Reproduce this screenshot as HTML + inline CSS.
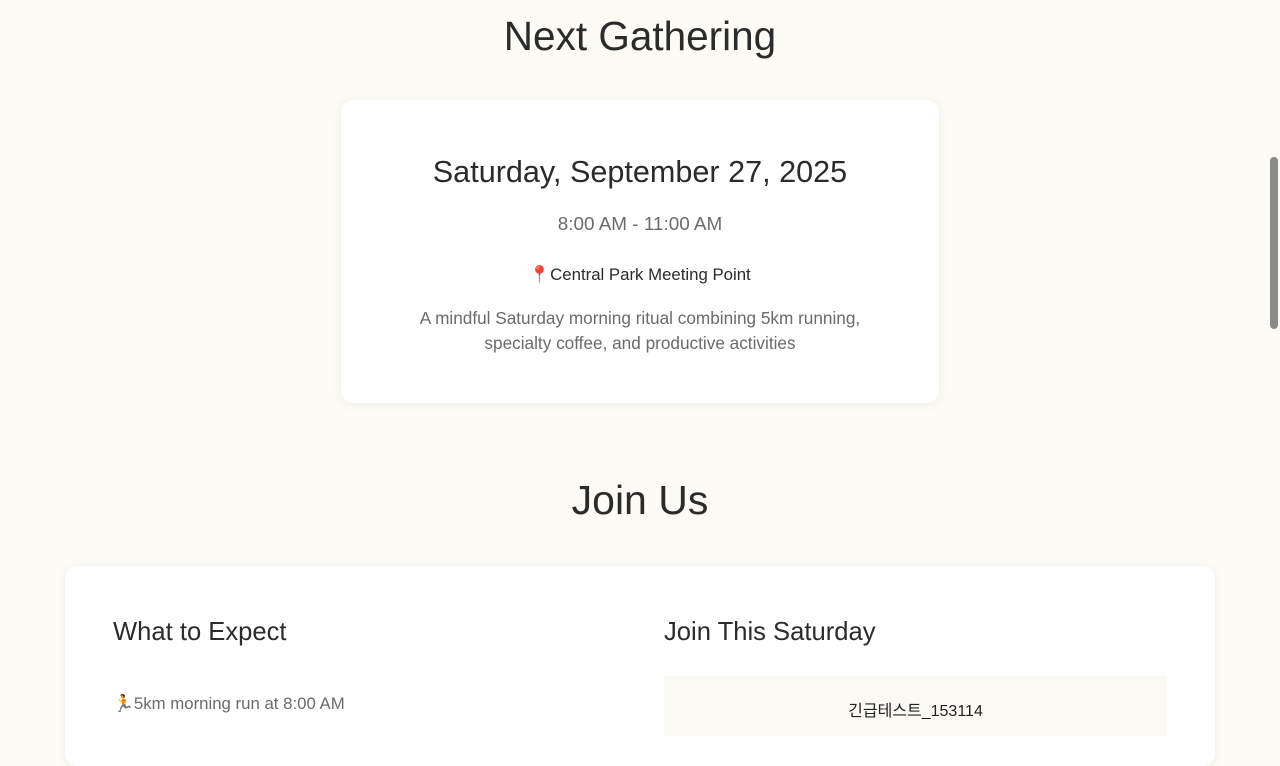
<!DOCTYPE html>
<html><head><meta charset="utf-8"><style>
body{margin:0;width:1280px;height:720px;overflow:hidden;background:#fcfbf6;font-family:"Liberation Sans","Noto Sans CJK KR",sans-serif;color:#2b2b2b;position:relative}
.a{position:absolute;white-space:nowrap}
.c{left:0;width:1280px;text-align:center}
.card{position:absolute;background:#fff;border-radius:12px;box-shadow:0 2px 10px rgba(0,0,0,0.06)}
</style></head><body>
<div class="a c" style="top:13px;font-size:40.5px;font-weight:300">Next Gathering</div>
<div class="card" style="left:341px;top:100px;width:598px;height:303px"></div>
<div class="a c" style="top:155px;font-size:30.6px">Saturday, September 27, 2025</div>
<div class="a c" style="top:214px;font-size:18.9px;color:#6b6b6b">8:00 AM - 11:00 AM</div>
<div class="a c" style="top:265px;font-size:16.8px;color:#2b2b2b"><span style="color:#d33">📍</span>Central Park Meeting Point</div>
<div class="a c" style="top:306px;font-size:17.2px;color:#6b6b6b;line-height:25px">A mindful Saturday morning ritual combining 5km running,<br>specialty coffee, and productive activities</div>
<div class="a c" style="top:477px;font-size:41px;font-weight:300">Join Us</div>
<div class="card" style="left:65px;top:566px;width:1150px;height:200px"></div>
<div class="a" style="left:113px;top:618px;font-size:25.6px">What to Expect</div>
<div class="a" style="left:664px;top:618px;font-size:25.6px">Join This Saturday</div>
<div class="a" style="left:113px;top:694px;font-size:16.8px;color:#6b6b6b">🏃5km morning run at 8:00 AM</div>
<div style="position:absolute;left:664px;top:676px;width:503px;height:60px;background:#faf9f4"></div>
<div class="a" style="left:664px;width:503px;text-align:center;top:697px;font-size:16px;color:#222">긴급테스트_153114</div>
<div style="position:absolute;left:1270px;top:157px;width:8px;height:172px;background:#8a8a8a;border-radius:4px"></div>
</body></html>
